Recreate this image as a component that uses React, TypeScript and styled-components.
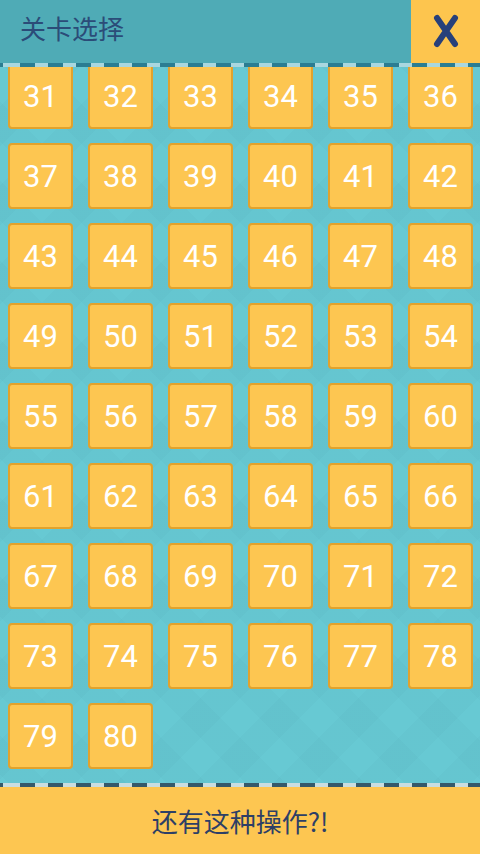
import React from 'react';
import styled, { createGlobalStyle } from 'styled-components';

const GlobalStyle = createGlobalStyle`
  html, body {
    margin: 0;
    padding: 0;
    width: 480px;
    height: 854px;
    overflow: hidden;
  }
  body {
    font-family: Roboto, "Noto Sans CJK SC", sans-serif;
  }
`;

const Screen = styled.div`
  width: 480px;
  height: 854px;
  display: flex;
  flex-direction: column;
  background-color: #67c9d3;
  background-image:
    repeating-linear-gradient(45deg, rgba(0, 60, 80, 0.025) 0 28px, transparent 28px 56px),
    repeating-linear-gradient(-45deg, rgba(0, 60, 80, 0.025) 0 28px, transparent 28px 56px);
  overflow: hidden;
`;

const Header = styled.header`
  position: relative;
  z-index: 2;
  flex: none;
  display: flex;
  flex-direction: column;
`;

const TopBar = styled.div`
  height: 63px;
  display: flex;
  align-items: stretch;
  background: #4fabb6;
`;

const Title = styled.h1`
  flex: 1;
  margin: 0;
  padding-left: 20px;
  display: flex;
  align-items: center;
  padding-bottom: 8px;
  font-family: "Noto Sans CJK SC", sans-serif;
  font-weight: 400;
  font-size: 26px;
  color: #2b4c78;
`;

const CloseButton = styled.button`
  width: 69px;
  border: none;
  padding: 0 0 2px 0;
  background: #fdc54e;
  display: flex;
  align-items: center;
  justify-content: center;
  cursor: pointer;
`;

const Dashes = styled.div<{ $dark: string; $light: string; $offset: number }>`
  height: 4px;
  flex: none;
  background: repeating-linear-gradient(
    90deg,
    ${(p) => p.$light} 0 13px,
    ${(p) => p.$dark} 13px 28px
  );
  background-position: ${(p) => p.$offset}px 0;
`;

const Scroll = styled.main`
  flex: 1;
  margin-top: -4px;
  padding: 0 7px 0 8px;
  overflow: hidden;
`;

const Grid = styled.div`
  display: grid;
  grid-template-columns: repeat(6, 65px);
  grid-auto-rows: 66px;
  column-gap: 15px;
  row-gap: 14px;
`;

const Tile = styled.button`
  box-sizing: border-box;
  border: 2px solid #e2a22c;
  border-radius: 4px;
  background: #fdc651;
  color: #ffffff;
  font-family: Roboto, sans-serif;
  font-size: 31px;
  font-weight: 400;
  padding: 0;
  display: flex;
  align-items: center;
  justify-content: center;
  cursor: pointer;
`;

const Footer = styled.footer`
  flex: none;
  display: flex;
  flex-direction: column;
`;

const FooterBar = styled.div`
  height: 67px;
  background: #fdc651;
  display: flex;
  align-items: center;
  justify-content: center;
  font-family: "Noto Sans CJK SC", sans-serif;
  font-size: 26px;
  color: #2d3f66;
`;

const CloseIcon = () => (
  <svg width="30" height="36" viewBox="0 0 30 36">
    <path
      d="M6 5 L24 31 M24 5 L6 31"
      stroke="#28407a"
      strokeWidth="6"
      strokeLinecap="round"
      fill="none"
    />
  </svg>
);

const levels = Array.from({ length: 50 }, (_, i) => i + 31);

export default function App() {
  return (
    <>
      <GlobalStyle />
      <Screen>
        <Header>
          <TopBar>
            <Title>关卡选择</Title>
            <CloseButton aria-label="close">
              <CloseIcon />
            </CloseButton>
          </TopBar>
          <Dashes $light="#a9d7df" $dark="#2b7d92" $offset={7} />
        </Header>
        <Scroll>
          <Grid>
            {levels.map((n) => (
              <Tile key={n}>{n}</Tile>
            ))}
          </Grid>
        </Scroll>
        <Footer>
          <Dashes $light="#c9dde0" $dark="#35596a" $offset={7} />
          <FooterBar>还有这种操作?!</FooterBar>
        </Footer>
      </Screen>
    </>
  );
}
